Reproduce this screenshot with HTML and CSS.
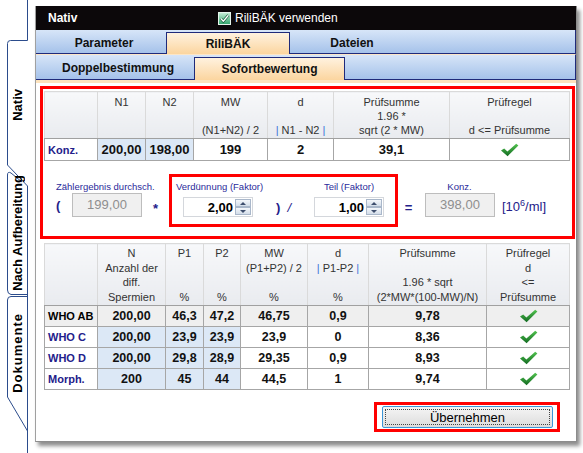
FILE: index.html
```html
<!DOCTYPE html>
<html lang="de">
<head>
  <meta charset="UTF-8" />
  <title>Nativ - RiliBÄK Sofortbewertung</title>
  <link rel="stylesheet" href="styles.css">
</head>
<body>
<div class="screen">
  <div class="sidetabs">
    <svg class="tab-lines" width="35" height="453" viewBox="0 0 35 453">
      <path d="M27.5 0 V40.5 H10.5 Q7.5 40.5 7.5 43.5 V165 L27.5 186" />
      <path d="M27.5 186 V453" />
      <path d="M22 182 L11 173 Q7.5 171 7.5 175 V290 Q7.5 294 11 294.5 H27.5" />
      <path d="M27.5 296.5 H11 Q7.5 296.5 7.5 300 V397 L27.5 431" />
    </svg>
    <div class="vtab vtab-nativ"><span>Nativ</span></div>
    <div class="vtab vtab-nach"><span>Nach Aufbereitung</span></div>
    <div class="vtab vtab-doku"><span>Dokumente</span></div>
  </div>

  <div class="window">
    <div class="titlebar">
      <span class="title">Nativ</span>
      <svg class="checkbox" width="13" height="13" viewBox="0 0 13 13">
        <defs>
          <linearGradient id="cbg" x1="0" y1="0" x2="0" y2="1">
            <stop offset="0" stop-color="#c9efd9"/>
            <stop offset="1" stop-color="#2fa56b"/>
          </linearGradient>
        </defs>
        <rect x="0.5" y="0.5" width="12" height="12" fill="url(#cbg)" stroke="#e6f5ec"/>
        <path d="M2.8 6.6 L5.3 9.2 L10.4 3.2" fill="none" stroke="#0c5a33" stroke-width="2.6"/>
        <path d="M2.8 6.6 L5.3 9.2 L10.4 3.2" fill="none" stroke="#fff" stroke-width="1.4"/>
      </svg>
      <span class="rili">RiliBÄK verwenden</span>
    </div>

    <div class="tabrow tabrow-main">
      <div class="tab tab-main">Parameter</div>
      <div class="tab tab-main active">RiliBÄK</div>
      <div class="tab tab-main">Dateien</div>
    </div>
    <div class="tabrow tabrow-sub">
      <div class="tab tab-doppel">Doppelbestimmung</div>
      <div class="tab tab-sofort active">Sofortbewertung</div>
    </div>
    <div class="peachstrip"></div>

    <div class="page">
      <div class="redbox calc">
        <table class="grid grid-konz">
          <colgroup>
            <col style="width:53px"><col style="width:48px"><col style="width:48px"><col style="width:74px">
            <col style="width:66px"><col style="width:116px"><col style="width:120px">
          </colgroup>
          <thead>
            <tr>
              <th></th>
              <th>N1</th>
              <th>N2</th>
              <th>MW<br>&nbsp;<br>(N1+N2) / 2</th>
              <th>d<br>&nbsp;<br><span class="pipe">|</span> N1 - N2 <span class="pipe">|</span></th>
              <th>Prüfsumme<br>1.96 *<br>sqrt (2 * MW)</th>
              <th>Prüfregel<br>&nbsp;<br>d &lt;= Prüfsumme</th>
            </tr>
          </thead>
          <tbody>
            <tr>
              <td class="rowlabel">Konz.</td>
              <td class="input">200,00</td>
              <td class="input">198,00</td>
              <td>199</td>
              <td>2</td>
              <td>39,1</td>
              <td><svg class="tick" width="19" height="14" viewBox="0 0 19 14"><path d="M1 7.5 L4.2 5.4 L7.4 8.6 L16.2 0.8 L18.4 2.6 L7.6 13.2 Z" fill="url(#tk)"/></svg></td>
            </tr>
          </tbody>
        </table>

        <div class="formula">
          <div class="fgroup fgroup-zaehler">
            <div class="flabel">Zählergebnis durchsch.</div>
            <div class="frow"><span class="sym paren">(</span><div class="readonly">199,00</div></div>
          </div>
          <span class="sym star">*</span>
          <div class="redbox factors">
            <div class="fgroup fgroup-verd">
              <div class="flabel">Verdünnung (Faktor)</div>
              <div class="spin"><span class="spin-val">2,00</span><span class="spin-btns"><i class="up"></i><i class="dn"></i></span></div>
            </div>
            <span class="sym divide">)&nbsp;&nbsp;<i>/</i></span>
            <div class="fgroup fgroup-teil">
              <div class="flabel">Teil (Faktor)</div>
              <div class="spin"><span class="spin-val">1,00</span><span class="spin-btns"><i class="up"></i><i class="dn"></i></span></div>
            </div>
          </div>
          <span class="sym equals">=</span>
          <div class="fgroup fgroup-konz">
            <div class="flabel">Konz.</div>
            <div class="readonly">398,00</div>
          </div>
          <span class="unit">[10<sup>6</sup>/ml]</span>
        </div>
      </div>

      <table class="grid grid-who">
        <colgroup>
          <col style="width:53px"><col style="width:68px"><col style="width:38px"><col style="width:37px">
          <col style="width:67px"><col style="width:61px"><col style="width:118px"><col style="width:83px">
        </colgroup>
        <thead>
          <tr>
            <th></th>
            <th>N<br>Anzahl der<br>diff.<br>Spermien</th>
            <th>P1<br>&nbsp;<br>&nbsp;<br>%</th>
            <th>P2<br>&nbsp;<br>&nbsp;<br>%</th>
            <th>MW<br>(P1+P2) / 2<br>&nbsp;<br>%</th>
            <th>d<br><span class="pipe">|</span> P1-P2 <span class="pipe">|</span><br>&nbsp;<br>%</th>
            <th>Prüfsumme<br>&nbsp;<br>1.96 * sqrt<br>(2*MW*(100-MW)/N)</th>
            <th>Prüfregel<br>d<br>&lt;=<br>Prüfsumme</th>
          </tr>
        </thead>
        <tbody>
          <tr class="selected">
            <td class="rowlabel">WHO AB</td>
            <td>200,00</td><td>46,3</td><td>47,2</td><td>46,75</td><td>0,9</td><td>9,78</td>
            <td><svg class="tick" width="19" height="14" viewBox="0 0 19 14"><path d="M1 7.5 L4.2 5.4 L7.4 8.6 L16.2 0.8 L18.4 2.6 L7.6 13.2 Z" fill="url(#tk)"/></svg></td>
          </tr>
          <tr>
            <td class="rowlabel">WHO C</td>
            <td class="input">200,00</td><td class="input">23,9</td><td class="input">23,9</td><td>23,9</td><td>0</td><td>8,36</td>
            <td><svg class="tick" width="19" height="14" viewBox="0 0 19 14"><path d="M1 7.5 L4.2 5.4 L7.4 8.6 L16.2 0.8 L18.4 2.6 L7.6 13.2 Z" fill="url(#tk)"/></svg></td>
          </tr>
          <tr>
            <td class="rowlabel">WHO D</td>
            <td class="input">200,00</td><td class="input">29,8</td><td class="input">28,9</td><td>29,35</td><td>0,9</td><td>8,93</td>
            <td><svg class="tick" width="19" height="14" viewBox="0 0 19 14"><path d="M1 7.5 L4.2 5.4 L7.4 8.6 L16.2 0.8 L18.4 2.6 L7.6 13.2 Z" fill="url(#tk)"/></svg></td>
          </tr>
          <tr>
            <td class="rowlabel">Morph.</td>
            <td class="input">200</td><td class="input">45</td><td class="input">44</td><td>44,5</td><td>1</td><td>9,74</td>
            <td><svg class="tick" width="19" height="14" viewBox="0 0 19 14"><path d="M1 7.5 L4.2 5.4 L7.4 8.6 L16.2 0.8 L18.4 2.6 L7.6 13.2 Z" fill="url(#tk)"/></svg></td>
          </tr>
        </tbody>
      </table>

      <div class="actions">
        <div class="redbox btnbox"><button class="btn" type="button">Übernehmen</button></div>
      </div>
    </div>
  </div>
</div>

<svg width="0" height="0" class="defs">
  <defs>
    <linearGradient id="tk" x1="0" y1="0" x2="0" y2="1">
      <stop offset="0" stop-color="#52c34f"/>
      <stop offset="1" stop-color="#136b22"/>
    </linearGradient>
  </defs>
</svg>
</body>
</html>
```

FILE: styles.css
```css
* { box-sizing: border-box; }
body { margin: 0; background: #fff; font-family: "Liberation Sans", Arial, sans-serif; font-size: 11px; color: #222; }
.screen { display: flex; width: 583px; height: 453px; overflow: hidden; }
.defs { position: absolute; }

/* left vertical tabs */
.sidetabs { position: relative; width: 35px; flex: none; padding-top: 40px; display: flex; flex-direction: column; }
.tab-lines { position: absolute; left: 0; top: 0; }
.tab-lines path { fill: none; stroke: #2b4c8c; stroke-width: 1; }
.vtab { display: flex; align-items: center; justify-content: center; width: 22px; margin-left: 6px; font-weight: bold; font-size: 13px; color: #000; }
.vtab span { writing-mode: vertical-rl; transform: rotate(180deg); white-space: nowrap; }
.vtab-nativ { height: 130px; }
.vtab-nach { height: 126px; }
.vtab-doku { height: 114px; letter-spacing: 1px; }

/* window */
.window { width: 542px; height: 436px; margin-top: 6px; background: #fff; border-left: 1px solid #a0a0a0; border-right: 1px solid #8c8c8c; border-bottom: 1px solid #8c8c8c; box-shadow: 3px 4px 4px rgba(0,0,0,.45); display: flex; flex-direction: column; }
.titlebar { height: 24px; background: #0c080a; color: #fff; display: flex; align-items: center; padding-left: 12px; font-size: 12px; }
.title { width: 170px; font-weight: bold; }
.checkbox { margin-right: 4px; }

.tabrow { display: flex; align-items: flex-end; padding-left: 6px; background: linear-gradient(#d7e5f8, #a5c2ea); border-right: 1px solid #1f2a7a; }
.tabrow-main { height: 24px; padding-top: 2px; border-bottom: 1px solid #1f2a7a; }
.tabrow-sub { height: 26px; padding-top: 3px; border-top: 1px solid #fde6c6; border-bottom: 1px solid #1f2a7a; }
.tab { display: flex; align-items: center; justify-content: center; font-weight: bold; font-size: 12px; color: #111; }
.tab-main { width: 124px; height: 21px; }
.tab-doppel { width: 152px; height: 22px; }
.tab-sofort { width: 151px; height: 22px; }
.tab.active { background: linear-gradient(#fff2df, #fbd59f); border: 1px solid #1f2a7a; border-bottom: none; margin-bottom: -1px; position: relative; }
.tab-main.active { height: 22px; }
.tab-sofort.active { height: 23px; }
.peachstrip { height: 3px; background: #fde3bd; }

.page { flex: 1; padding: 3px 1px 0 4px; }
.redbox { border: 3px solid #ff0000; }
.calc { height: 153px; padding: 2px 3px 0 1px; }

/* tables */
.grid { border-collapse: collapse; table-layout: fixed; width: 525px; border: 1px solid #9a9a9a; }
.grid th { vertical-align: top; font-weight: normal; font-size: 11px; line-height: 14px; color: #333; padding: 3px 1px 0; background: linear-gradient(#f7f8fa, #e9ebef); border: 1px solid #dadada; border-bottom: 1px solid #a0a0a0; white-space: nowrap; }
.grid-konz th { height: 47px; }
.grid-who th { height: 62px; line-height: 14.5px; padding-top: 2px; }
.pipe { color: #3b74d8; }
.grid td { border: 1px solid #a6a6a6; text-align: center; font-weight: bold; color: #111; padding: 0; }
.grid-konz td { height: 22px; font-size: 13px; }
.grid-who td { height: 21px; font-size: 12.5px; }
.grid td.rowlabel { text-align: left; padding-left: 3px; font-size: 11px; color: #23208a; }
.grid td.input { background: #dce8f6; }
.grid tr.selected td { background: #efefef; }
.grid tr.selected td.rowlabel { color: #000; }
.tick { display: block; margin: 0 auto; }
.grid-who { margin: 4px 0 0 4px; }

/* formula */
.formula { display: flex; align-items: flex-start; padding-top: 13px; color: #23208a; }
.fgroup { margin-top: 7px; }
.flabel { height: 12px; line-height: 12px; font-size: 9.5px; color: #2a2a9a; white-space: nowrap; }
.frow { display: flex; align-items: center; }
.fgroup-zaehler { margin-left: 12px; width: 86px; }
.paren { width: 16px; }
.sym { font-weight: bold; font-size: 13px; line-height: 15px; color: #23208a; }
.readonly { width: 70px; height: 24px; line-height: 22px; text-align: center; border: 1px solid #bdbdbd; background: #f0f0f0; color: #8e8e8e; font-size: 13px; }
.star { width: 27px; text-align: center; margin-top: 27px; }
.factors { display: flex; align-items: flex-start; width: 229px; height: 53px; padding: 4px 11px 0 4px; }
.factors .fgroup { margin-top: 0; }
.fgroup-verd { width: 77px; }
.fgroup-verd .spin { margin-left: 7px; margin-top: 4px; }
.divide { width: 61px; text-align: center; margin-top: 19px; }
.divide i { font-weight: normal; }
.fgroup-teil { width: 70px; }
.fgroup-teil .flabel, .fgroup-konz .flabel { text-align: center; }
.fgroup-teil .spin { margin-top: 4px; }
.equals { width: 27px; text-align: center; margin-top: 26px; padding-right: 6px; }
.fgroup-konz { width: 69px; }
.unit { margin: 24px 0 0 8px; font-size: 13px; color: #23208a; }
.unit sup { font-size: 9px; }

.spin { display: flex; width: 70px; height: 20px; border: 1px solid #d4d7dc; background: #fff; padding: 1px 1px 1px 0; }
.spin-val { flex: 1; text-align: right; font-weight: bold; font-size: 13px; line-height: 17px; padding-right: 2px; color: #000; }
.spin-btns { display: flex; flex-direction: column; width: 16px; }
.spin-btns i { flex: 1; display: flex; align-items: center; justify-content: center; border: 1px solid #a9b7ca; background: linear-gradient(#f4f7fb, #d3dde9); }
.spin-btns i::after { content: ""; border-left: 3px solid transparent; border-right: 3px solid transparent; }
.spin-btns .up::after { border-bottom: 3px solid #3d4d6d; }
.spin-btns .dn::after { border-top: 3px solid #3d4d6d; }

/* button */
.actions { display: flex; justify-content: flex-end; margin-top: 12px; padding-right: 15px; }
.btnbox { padding: 1px 4px 1px 5px; }
.btn { width: 171px; height: 22px; border: 1px solid #3c95d6; border-radius: 2px; background: linear-gradient(#f5f5f5, #dcdcdc); font-family: "Liberation Sans", Arial, sans-serif; font-size: 13px; color: #000; outline: 1px dotted #444; outline-offset: -4px; padding: 0; }
```
